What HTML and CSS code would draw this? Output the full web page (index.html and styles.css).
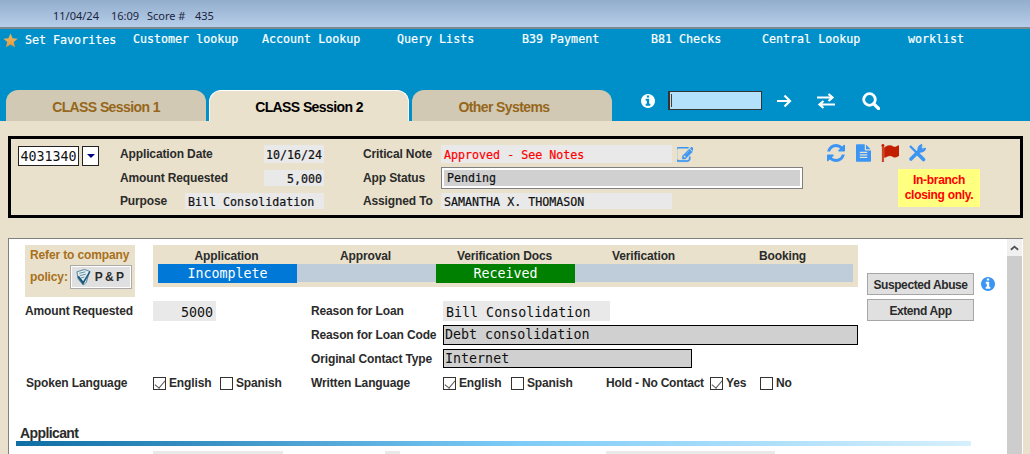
FILE: index.html
```html
<!DOCTYPE html>
<html lang="en">
<head>
  <meta charset="UTF-8">
  <title>CLASS Session 2</title>
  <link rel="stylesheet" href="styles.css">
</head>
<body>
  <div class="topbar">
    <span class="stamp-date">11/04/24</span>
    <span class="stamp-time">16:09</span>
    <span class="stamp-score">Score #</span>
    <span>435</span>
  </div>

  <div class="bluebar">
    <div class="nav">
      <svg class="star" viewBox="0 0 16 16"><defs><linearGradient id="stargrad" x1="0" y1="0" x2="0" y2="1"><stop offset="0" stop-color="#f0b868"/><stop offset="1" stop-color="#e39a3c"/></linearGradient></defs><polygon points="8,0.5 10.2,5.6 15.6,6.1 11.5,9.7 12.8,15.2 8,12.3 3.2,15.2 4.5,9.7 0.4,6.1 5.8,5.6" fill="url(#stargrad)"/></svg>
      <div class="nav-links">
        <a class="fav">Set Favorites</a>
        <a>Customer lookup</a>
        <a>Account Lookup</a>
        <a>Query Lists</a>
        <a>B39 Payment</a>
        <a>B81 Checks</a>
        <a>Central Lookup</a>
        <a>worklist</a>
      </div>
    </div>
    <div class="tabrow">
      <div class="tab">CLASS Session 1</div>
      <div class="tab active">CLASS Session 2</div>
      <div class="tab tab-other">Other Systems</div>
      <div class="quick">
        <svg class="q-info" viewBox="128 128 1536 1536"><path fill="#fff" d="M1152 1376v-160q0-14-9-23t-23-9h-96v-512q0-14-9-23t-23-9h-320q-14 0-23 9t-9 23v160q0 14 9 23t23 9h96v320h-96q-14 0-23 9t-9 23v160q0 14 9 23t23 9h448q14 0 23-9t9-23zm-128-896v-160q0-14-9-23t-23-9h-192q-14 0-23 9t-9 23v160q0 14 9 23t23 9h192q14 0 23-9t9-23zm640 416q0 209-103 385.500t-279.500 279.500-385.500 103-385.500-103-279.500-279.500-103-385.500 103-385.500 279.500-279.500 385.500-103 385.500 103 279.500 279.500 103 385.500z"/></svg>
        <div class="q-input"></div>
        <svg class="q-arrow" viewBox="0 0 16 14"><path d="M1 7h13M8.500 1.500L14 7l-5.500 5.500" fill="none" stroke="#fff" stroke-width="2.200"/></svg>
        <svg class="q-swap" viewBox="0 0 18 16"><path d="M0 4.500h15M11.500 1L15.500 4.500 11.500 8M18 11.500H3M6.500 8L2.500 11.500 6.500 15" fill="none" stroke="#fff" stroke-width="2.200"/></svg>
        <svg class="q-search" viewBox="0 0 18 18"><circle cx="7.500" cy="7.500" r="5.800" fill="none" stroke="#fff" stroke-width="2.800"/><path d="M11.800 11.800L16.500 16.500" stroke="#fff" stroke-width="3.200" stroke-linecap="round"/></svg>
      </div>
    </div>
  </div>

  <div class="page">
    <div class="summary">
      <div class="acct">
        <div class="acct-num">4031340</div>
        <div class="acct-drop"></div>
      </div>
      <div class="summary-grid">
        <div class="label">Application Date</div>
        <div class="val val-date">10/16/24</div>
        <div class="label note-label">Critical Note</div>
        <div class="val val-note">Approved - See Notes</div>
        <svg class="edit-icon" viewBox="128 128 1536 1536"><path fill="#3a95f5" stroke="#3a95f5" stroke-width="36" d="M888 1184l116-116-152-152-116 116v56h96v96h56zm440-720q-16-16-33 1l-350 350q-17 17-1 33t33-1l350-350q17-17 1-33zm80 594v190q0 119-84.500 203.500t-203.500 84.500h-832q-119 0-203.500-84.500t-84.500-203.500v-832q0-119 84.500-203.500t203.500-84.500h832q63 0 117 25 15 7 18 23 3 17-9 29l-49 49q-14 14-32 8-23-6-45-6h-832q-66 0-113 47t-47 113v832q0 66 47 113t113 47h832q66 0 113-47t47-113v-126q0-13 9-22l64-64q15-15 35-7t20 29zm-96-738l288 288-672 672h-288v-288zm444 132l-92 92-288-288 92-92q28-28 68-28t68 28l152 152q28 28 28 68t-28 68z"/></svg>

        <div class="label amount-label">Amount Requested</div>
        <div class="val val-amount">5,000</div>
        <div class="label status-label">App Status</div>
        <div class="val-status">Pending</div>

        <div class="label purpose-label">Purpose</div>
        <div class="val val-purpose">Bill Consolidation</div>
        <div class="label assigned-label">Assigned To</div>
        <div class="val val-assigned">SAMANTHA X. THOMASON</div>
      </div>
      <div class="tools">
        <div class="tool-icons">
          <svg viewBox="128 128 1536 1536" class="ic-refresh"><path fill="#3a95f5" d="M1639 1056q0 5-1 7-64 268-268 434.500t-478 166.500q-146 0-282.500-55t-243.500-157l-129 129q-19 19-45 19t-45-19-19-45v-448q0-26 19-45t45-19h448q26 0 45 19t19 45-19 45l-137 137q71 66 161 102t187 36q134 0 250-65t186-179q11-17 53-117 8-23 30-23h192q13 0 22.500 9.500t9.500 22.500zm25-800v448q0 26-19 45t-45 19h-448q-26 0-45-19t-19-45 19-45l138-138q-148-137-349-137-134 0-250 65t-186 179q-11 17-53 117-8 23-30 23h-199q-13 0-22.500-9.500t-9.500-22.500v-7q65-268 270-434.500t480-166.500q146 0 284 55.500t245 156.500l130-129q19-19 45-19t45 19 19 45z"/></svg>
          <svg viewBox="128 0 1536 1792" class="ic-doc"><path fill="#3a95f5" d="M1596 476q14 14 28 36h-472v-472q22 14 36 28zm-476 164h544v1056q0 40-28 68t-68 28h-1344q-40 0-68-28t-28-68v-1600q0-40 28-68t68-28h800v544q0 40 28 68t68 28zm160 736v-64q0-14-9-23t-23-9h-704q-14 0-23 9t-9 23v64q0 14 9 23t23 9h704q14 0 23-9t9-23zm0-256v-64q0-14-9-23t-23-9h-704q-14 0-23 9t-9 23v64q0 14 9 23t23 9h704q14 0 23-9t9-23zm0-256v-64q0-14-9-23t-23-9h-704q-14 0-23 9t-9 23v64q0 14 9 23t23 9h704q14 0 23-9t9-23z"/></svg>
          <svg viewBox="0 128 1792 1536" preserveAspectRatio="none" class="ic-flag"><path fill="#c11f00" stroke="#c11f00" stroke-width="40" d="M320 256q0 72-64 110v1266q0 13-9.500 22.500t-22.500 9.500h-64q-13 0-22.500-9.500t-9.500-22.500v-1266q-64-38-64-110 0-53 37.500-90.500t90.500-37.500 90.500 37.500 37.500 90.500zm1472 64v763q0 25-12.500 38.500t-39.500 27.500q-215 116-369 116-61 0-123.500-22t-108.500-48-115.500-48-142.500-22q-192 0-464 146-17 9-33 9-26 0-45-19t-19-45v-742q0-32 31-55 21-14 79-43 236-120 421-120 107 0 200 29t219 88q38 19 88 19 54 0 117.500-21t110-47 88-47 54.500-21q26 0 45 19t19 45z"/></svg>
          <svg viewBox="0 0 18 18" class="ic-tools"><g fill="none" stroke="#3a95f5"><path d="M2 2L9 9" stroke-width="2.400"/><path d="M9 9L15.500 15.500" stroke-width="3.600" stroke-linecap="round"/><path d="M13 5L3 15" stroke-width="3.600" stroke-linecap="round"/><path d="M16.800 3.800a4 4 0 0 1-5.300 3.300M14.200 1.200a4 4 0 0 0-3.100 5.500" stroke-width="2.600"/></g></svg>
        </div>
        <div class="branch-note">In-branch<br>closing only.</div>
      </div>
    </div>

    <div class="panel">
      <div class="panel-body">
        <div class="upper">
          <div class="main">
            <div class="head-row">
              <div class="policy">
                <div class="policy-text">Refer to company</div>
                <div class="policy-line">
                  <span class="policy-text">policy:</span>
                  <div class="pp-btn">
                    <svg viewBox="0 0 18 18"><path d="M2 3l8-2.500 5.500 2L12 14l-3 3-5.500-6z" fill="#e4edf2" stroke="#4f7f98" stroke-width="1"/><path d="M4.500 4.500l6.500-1.500M5 7l6.500-1.500M6 9.500l4-1" stroke="#4f7f98" stroke-width=".9"/><path d="M2.500 8.500L8.500 17 16.500 3l-1.200-.8L8.700 13 4 7.200z" fill="#17577a"/></svg>
                    <span>P &amp; P</span>
                  </div>
                </div>
              </div>
              <div class="stages">
                <div class="stage-names">
                  <div>Application</div>
                  <div>Approval</div>
                  <div>Verification Docs</div>
                  <div>Verification</div>
                  <div>Booking</div>
                </div>
                <div class="stage-bar">
                  <div class="st-blue">Incomplete</div>
                  <div></div>
                  <div class="st-green">Received</div>
                  <div></div>
                  <div></div>
                </div>
              </div>
            </div>

            <div class="fields">
              <div class="label f-first">Amount Requested</div>
              <div class="box box-amount">5000</div>
              <div class="label">Reason for Loan</div>
              <div class="box box-reason">Bill Consolidation</div>

              <div class="label r2">Reason for Loan Code</div>
              <div class="box-select r2">Debt consolidation</div>

              <div class="label r3">Original Contact Type</div>
              <div class="box-select box-contact r3">Internet</div>

              <div class="label f-lang">Spoken Language</div>
              <div class="checks">
                <label class="w-en"><input type="checkbox" checked>English</label>
                <label><input type="checkbox">Spanish</label>
              </div>
              <div class="label">Written Language</div>
              <div class="checks">
                <label class="w-en2"><input type="checkbox" checked>English</label>
                <label class="w-sp"><input type="checkbox">Spanish</label>
                <span class="hold">Hold - No Contact</span>
                <label class="w-yes"><input type="checkbox" checked>Yes</label>
                <label><input type="checkbox">No</label>
              </div>
            </div>
          </div>

          <div class="side">
            <div class="side-row">
              <div class="btn">Suspected Abuse</div>
              <svg class="side-info" viewBox="128 128 1536 1536"><path fill="#3a95f5" d="M1152 1376v-160q0-14-9-23t-23-9h-96v-512q0-14-9-23t-23-9h-320q-14 0-23 9t-9 23v160q0 14 9 23t23 9h96v320h-96q-14 0-23 9t-9 23v160q0 14 9 23t23 9h448q14 0 23-9t9-23zm-128-896v-160q0-14-9-23t-23-9h-192q-14 0-23 9t-9 23v160q0 14 9 23t23 9h192q14 0 23-9t9-23zm640 416q0 209-103 385.500t-279.500 279.500-385.500 103-385.500-103-279.500-279.500-103-385.500 103-385.500 279.500-279.500 385.500-103 385.500 103 279.500 279.500 103 385.500z"/></svg>
            </div>
            <div class="btn">Extend App</div>
          </div>
        </div>

        <div class="section-title">Applicant</div>
        <div class="section-rule"></div>
        <div class="next-row">
          <div class="next-a"></div>
          <div class="next-b"></div>
          <div class="next-c"></div>
        </div>
      </div>
      <div class="scrollbar">
        <div class="scroll-up"><svg viewBox="0 0 10 6"><path d="M1 5l4-3.500L9 5" fill="none" stroke="#505050" stroke-width="2"/></svg></div>
      </div>
    </div>
  </div>
</body>
</html>
```

FILE: styles.css
```css
* {
  box-sizing: border-box;
}
html, body {
  height: 454px;
}
body {
  margin: 0;
  overflow: hidden;
  background: #e9e1cc;
  font-family: "Liberation Sans", Arial, sans-serif;
  font-size: 12px;
  letter-spacing: -0.13px;
  color: #2b2b2b;
}

/* top strip */
.topbar {
  display: flex;
  align-items: center;
  height: 29px;
  padding: 4px 0 0 53px;
  border-bottom: 2px solid #7d8790;
  background: linear-gradient(to bottom, #93adce 0%, #b6cee8 100%);
  font-family: "Noto Sans", sans-serif;
  font-size: 11px;
  letter-spacing: 0;
  color: #1b2440;
}
.stamp-date { width: 58px; }
.stamp-time { width: 36px; }
.stamp-score { width: 48px; }

/* blue bar */
.bluebar {
  display: flex;
  flex-direction: column;
  justify-content: space-between;
  height: 92px;
  background: #0090c9;
}
.nav {
  display: flex;
  padding: 3px 0 0 3px;
}
.star {
  width: 15px;
  height: 15px;
  margin-top: 1px;
}
.nav-links {
  display: grid;
  grid-template-columns: 108px 129px 135px 125px 129px 111px 146px auto;
  margin-left: 7px;
  font-family: "DejaVu Sans Mono", monospace;
  font-size: 11.67px;
  letter-spacing: 0;
  line-height: 14px;
  color: #fff;
  -webkit-text-stroke: 0.2px #fff;
}
.nav-links .fav {
  margin-top: 1px;
}

.tabrow {
  display: flex;
  gap: 3px;
  padding-left: 6px;
}
.tab {
  width: 200px;
  height: 31px;
  border-radius: 12px 12px 0 0;
  background: #d1c9b4;
  color: #96661a;
  font-weight: bold;
  font-size: 14px;
  letter-spacing: -0.6px;
  line-height: 34px;
  text-align: center;
}
.tab.active {
  border: 1px solid #fff;
  border-bottom: 0;
  background: #e9e1cc;
  color: #000;
  line-height: 32px;
}
.tab-other {
  padding-right: 16px;
}
.quick {
  display: flex;
  align-items: center;
  height: 21px;
  margin-left: 26px;
}
.q-info {
  width: 14px;
  height: 14px;
}
.q-input {
  width: 94px;
  height: 19px;
  margin-left: 13px;
  border: 1px solid #333;
  border-left: 2px solid #333;
  background: #b3e0fb;
  position: relative;
}
.q-input::after {
  content: "";
  position: absolute;
  left: 1px;
  top: 2px;
  width: 1px;
  height: 13px;
  background: #5a3a20;
}
.q-arrow {
  width: 16px;
  height: 14px;
  margin-left: 14px;
}
.q-swap {
  width: 18px;
  height: 16px;
  margin-left: 25px;
}
.q-search {
  width: 18px;
  height: 18px;
  margin-left: 27px;
}

/* page */
.page {
  padding: 15px 7px 0 8px;
}
.summary {
  display: flex;
  height: 82px;
  padding: 6px 0 0 7px;
  border: 3px solid #000;
}
.acct {
  display: flex;
  gap: 3px;
  width: 102px;
  height: 20px;
  margin-top: 1px;
}
.acct-num {
  width: 61px;
  height: 20px;
  border: 1px solid #222;
  background: #fff;
  font-family: "DejaVu Sans Mono", monospace;
  font-size: 13.33px;
  letter-spacing: 0;
  line-height: 19px;
  text-align: center;
  color: #111;
}
.acct-drop {
  position: relative;
  width: 17px;
  height: 20px;
  border: 1px solid #222;
  background: #fff;
}
.acct-drop::after {
  content: "";
  position: absolute;
  left: 4px;
  top: 7px;
  border: 4px solid transparent;
  border-top: 4px solid #000080;
  border-bottom: 0;
}
.summary-grid {
  display: grid;
  grid-template-columns: 65px 79px 60px 39px 78px 231px 131px;
  grid-template-rows: 22px 26px 16px;
  flex: none;
}
.label {
  font-weight: bold;
  line-height: 18px;
  color: #2b2b2b;
  white-space: nowrap;
}
.amount-label { grid-column: 1 / 3; margin-top: 2px; }
.purpose-label { grid-column: 1; margin-top: -1px; }
.note-label { grid-column: 5; }
.status-label { grid-column: 5; grid-row: 2; margin-top: 2px; }
.assigned-label { grid-column: 5; grid-row: 3; margin-top: -1px; }
.val {
  background: #e9e9e9;
  font-family: "DejaVu Sans Mono", monospace;
  font-size: 11.67px;
  letter-spacing: 0;
  color: #111;
  white-space: nowrap;
  -webkit-text-stroke: 0.2px;
}
.val-date {
  grid-column: 3;
  height: 18px;
  line-height: 20px;
  padding-left: 2px;
}
.val-note {
  grid-column: 6;
  height: 18px;
  line-height: 20px;
  padding-left: 3px;
  color: #f00;
}
.edit-icon {
  grid-column: 7;
  width: 16px;
  height: 16px;
  margin: 2px 0 0 5px;
}
.val-amount {
  grid-column: 3;
  grid-row: 2;
  height: 16px;
  margin-top: 3px;
  line-height: 18px;
  text-align: right;
  padding-right: 2px;
}
.val-status {
  grid-column: 6 / 8;
  grid-row: 2;
  height: 22px;
  border: 1px solid #7f7f7f;
  box-shadow: inset 0 0 0 2px #fff;
  background: #d0d0d0;
  padding-left: 5px;
  font-family: "DejaVu Sans Mono", monospace;
  font-size: 11.67px;
  letter-spacing: 0;
  line-height: 20px;
  color: #111;
  -webkit-text-stroke: 0.2px;
}
.val-purpose {
  grid-column: 2 / 4;
  grid-row: 3;
  height: 16px;
  line-height: 18px;
  padding-left: 3px;
}
.val-assigned {
  grid-column: 6;
  grid-row: 3;
  height: 16px;
  line-height: 18px;
  padding-left: 3px;
}
.tools {
  margin-left: 24px;
}
.tool-icons {
  display: flex;
  align-items: center;
  height: 18px;
  margin-top: -1px;
}
.ic-refresh { width: 18px; height: 18px; }
.ic-doc { width: 15px; height: 18px; margin-left: 11px; }
.ic-flag { width: 18px; height: 18px; margin-left: 10px; }
.ic-tools { width: 18px; height: 18px; margin-left: 9px; }
.branch-note {
  width: 82px;
  height: 38px;
  margin: 7px 0 0 71px;
  padding-top: 4px;
  background: #ffff80;
  color: #f00;
  font-weight: bold;
  letter-spacing: -0.3px;
  line-height: 15px;
  text-align: center;
}

/* white panel */
.panel {
  display: flex;
  height: 216px;
  margin-top: 20px;
  border-top: 1px solid #808080;
  border-left: 1px solid #808080;
  background: #fff;
  overflow: hidden;
}
.panel-body {
  width: 998px;
  flex: none;
}
.upper {
  display: flex;
}
.main {
  width: 850px;
  flex: none;
  padding-top: 6px;
}
.head-row {
  display: flex;
  height: 52px;
  padding-left: 16px;
}
.policy {
  width: 110px;
  height: 52px;
  padding: 2px 0 0 5px;
  background: #e9e1cc;
}
.policy-text {
  font-weight: bold;
  line-height: 16px;
  color: #a8701a;
}
.policy-line {
  display: flex;
  align-items: center;
  gap: 2px;
  margin-top: 2px;
}
.pp-btn {
  display: flex;
  align-items: center;
  gap: 3px;
  width: 62px;
  height: 24px;
  padding-left: 4px;
  border: 1px solid #aaa;
  box-shadow: 0 0 0 1px #fff inset;
  background: #e0e0e0;
  font-weight: bold;
  letter-spacing: -0.5px;
  color: #2b2b2b;
}
.pp-btn svg {
  width: 17px;
  height: 17px;
}
.stages {
  width: 705px;
  height: 42px;
  margin-left: 18px;
  padding: 0 5px;
  background: #e9e1cc;
}
.stage-names,
.stage-bar {
  display: grid;
  grid-template-columns: repeat(5, 139px);
  text-align: center;
}
.stage-names {
  height: 19px;
  font-weight: bold;
  line-height: 22px;
}
.stage-names div {
  padding-right: 2px;
}
.stage-bar {
  height: 18px;
  background: #bfcddb;
  font-family: "DejaVu Sans Mono", monospace;
  font-size: 13.33px;
  letter-spacing: 0;
  line-height: 19px;
  color: #fff;
}
.st-blue { background: #0078d7; }
.st-green { background: #008000; }

.fields {
  display: grid;
  grid-template-columns: 144px 158px 132px 415px;
  grid-auto-rows: 20px;
  row-gap: 4px;
  margin-top: 4px;
}
.fields .label {
  line-height: 20px;
}
.f-first {
  padding-left: 16px;
}
.r2, .r3 {
  grid-column: 3;
}
.box-select.r2, .box-select.r3 {
  grid-column: 4;
}
.box {
  background: #e9e9e9;
  font-family: "DejaVu Sans Mono", monospace;
  font-size: 13.33px;
  letter-spacing: 0;
  line-height: 23px;
  color: #111;
}
.box-amount {
  width: 63px;
  padding-right: 3px;
  text-align: right;
}
.box-reason {
  width: 167px;
  padding-left: 3px;
}
.box-select {
  border: 1px solid #000;
  background: #d0d0d0;
  padding-left: 1px;
  font-family: "DejaVu Sans Mono", monospace;
  font-size: 13.33px;
  letter-spacing: 0;
  line-height: 18px;
  color: #111;
}
.box-contact {
  width: 249px;
  height: 19px;
}
.f-lang {
  padding-left: 17px;
}
.checks {
  display: flex;
  align-items: center;
  font-weight: bold;
  color: #2b2b2b;
}
.checks label {
  display: flex;
  align-items: center;
}
.checks input {
  appearance: none;
  position: relative;
  width: 13px;
  height: 13px;
  margin: 0 3px 0 0;
  border: 1px solid #333;
  background: #fff;
}
.checks input:checked::after {
  content: "";
  position: absolute;
  left: 3px;
  top: 0;
  width: 5px;
  height: 9px;
  border: solid #555;
  border-width: 0 1px 1px 0;
  transform: rotate(40deg);
}
.w-en { width: 67px; }
.w-en2 { width: 68px; }
.w-sp { width: 95px; }
.hold { width: 104px; letter-spacing: -0.2px; }
.w-yes { width: 50px; }

/* right side buttons */
.side {
  display: flex;
  flex-direction: column;
  gap: 4px;
  margin: 34px 0 0 8px;
}
.side-row {
  display: flex;
  align-items: center;
  gap: 7px;
}
.btn {
  width: 107px;
  height: 22px;
  border: 1px solid #a6a6a6;
  background: #e0e0e0;
  font-weight: bold;
  letter-spacing: -0.4px;
  line-height: 22px;
  text-align: center;
  color: #2b2b2b;
}
.side-info {
  width: 14px;
  height: 14px;
}

/* applicant section */
.section-title {
  margin: 32px 0 0 11px;
  font-weight: bold;
  font-size: 14px;
  letter-spacing: -0.6px;
  line-height: 16px;
  color: #2b2b2b;
}
.section-rule {
  width: 955px;
  height: 5px;
  margin-left: 7px;
  background: linear-gradient(to right, #0f6ea4 0%, #7ccbf7 52%, #d6f0fd 100%);
}
.next-row {
  display: flex;
  height: 10px;
  margin-top: 5px;
  padding-left: 144px;
}
.next-row div {
  background: #e9e9e9;
}
.next-a { width: 130px; }
.next-b { width: 15px; margin-left: 102px; }
.next-c { width: 169px; margin-left: 206px; }

.scrollbar {
  width: 15px;
  flex: none;
  background: #cdcdcd;
}
.scroll-up {
  display: flex;
  align-items: center;
  justify-content: center;
  height: 17px;
  background: #f0f0f0;
}
.scroll-up svg {
  width: 9px;
  height: 6px;
}
```
